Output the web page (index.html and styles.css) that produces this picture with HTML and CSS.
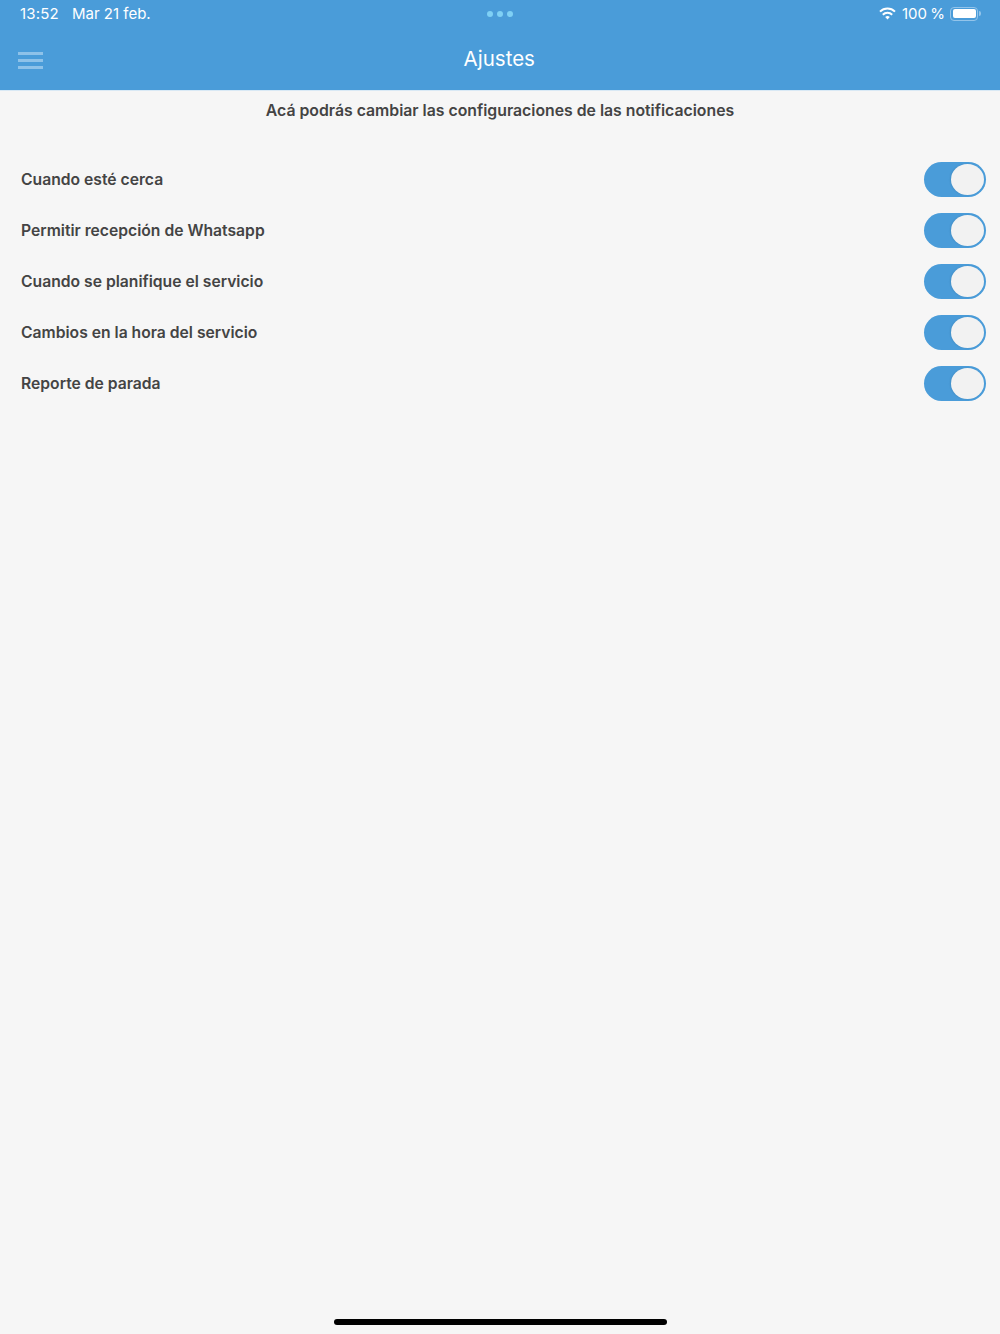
FILE: index.html
```html
<!DOCTYPE html>
<html lang="es">
<head>
<meta charset="utf-8">
<title>Ajustes</title>
<link rel="stylesheet" href="styles.css">
</head>
<body>
<div class="page">
  <header class="header">
    <div class="status">
      <div class="status-left"><span class="time">13:52</span><span>Mar 21 feb.</span></div>
      <div class="dots"><i></i><i></i><i></i></div>
      <div class="status-right">
        <svg class="wifi" width="17" height="13" viewBox="0 0 17 13" fill="none" stroke="#fff"><path d="M1 4.600A10.600 10.600 0 0 1 16 4.600" stroke-width="2"/><path d="M3.800 7.700A6.600 6.600 0 0 1 13.200 7.700" stroke-width="2"/><path d="M6.200 10.100a3.200 3.200 0 0 1 4.600 0L8.500 12.600z" fill="#fff" stroke="none"/></svg>
        <span class="pct">100 %</span>
        <div class="battery"><div class="battery-fill"></div></div>
        <div class="battery-tip"></div>
      </div>
    </div>
    <div class="nav">
      <div class="menu"><i></i><i></i><i></i></div>
      <h1 class="title">Ajustes</h1>
    </div>
  </header>
  <p class="intro">Acá podrás cambiar las configuraciones de las notificaciones</p>
  <ul class="list">
    <li class="row"><span>Cuando esté cerca</span><div class="switch"><div class="knob"></div></div></li>
    <li class="row"><span>Permitir recepción de Whatsapp</span><div class="switch"><div class="knob"></div></div></li>
    <li class="row"><span>Cuando se planifique el servicio</span><div class="switch"><div class="knob"></div></div></li>
    <li class="row"><span>Cambios en la hora del servicio</span><div class="switch"><div class="knob"></div></div></li>
    <li class="row"><span>Reporte de parada</span><div class="switch"><div class="knob"></div></div></li>
  </ul>
  <div class="spacer"></div>
  <div class="home-wrap"><div class="home"></div></div>
</div>
</body>
</html>
```
FILE: styles.css
```css
* { box-sizing: border-box; }
html, body { margin: 0; padding: 0; }
body {
  font-family: Inter, Roboto, "Liberation Sans", sans-serif;
  background: #f6f6f6;
  color: #444;
}
.page {
  height: 1334px;
  display: flex;
  flex-direction: column;
  overflow: hidden;
}
.header {
  height: 91px;
  flex: none;
  background: #4a9cd9;
  color: #fff;
  border-bottom: 1px solid #d9e9f5;
}
.status {
  height: 27px;
  padding: 0 19px 0 20px;
  display: grid;
  grid-template-columns: 1fr auto 1fr;
  align-items: center;
  font-size: 15px;
}
.status-left { display: flex; gap: 13px; }
.time { letter-spacing: .2px; }
.status-right { display: flex; align-items: center; justify-content: flex-end; gap: 5px; }
.pct { word-spacing: -1px; }
.dots { display: flex; gap: 4px; margin-right: 1px; }
.dots i { width: 6px; height: 6px; border-radius: 50%; background: #7fd0f5; }
.wifi { display: block; margin-right: 1px; }
.battery {
  width: 28px;
  height: 14px;
  padding: 1.5px;
  border: 1px solid #93c4ea;
  border-radius: 4px;
}
.battery-fill { height: 100%; background: #fff; border-radius: 2px; }
.battery-tip {
  width: 2px;
  height: 5px;
  margin-left: -4px;
  background: #93c4ea;
  border-radius: 0 2px 2px 0;
}
.nav {
  height: 63px;
  position: relative;
  display: flex;
  align-items: center;
  justify-content: center;
}
.title { margin: 0 1.500px 0 0; font-size: 20.500px; font-weight: 400; }
.menu {
  position: absolute;
  left: 18px;
  top: 25px;
  width: 25px;
  display: flex;
  flex-direction: column;
  gap: 4px;
}
.menu i { height: 3px; background: #8ec2e9; }
.intro {
  margin: 0;
  padding-top: 10px;
  height: 63px;
  line-height: 20px;
  text-align: center;
  font-size: 15.800px;
  font-weight: 600;
}
.list { list-style: none; margin: 0; padding: 0 14px 0 21px; }
.row {
  height: 51px;
  display: flex;
  align-items: center;
  justify-content: space-between;
  font-size: 15.700px;
  font-weight: 600;
}
.switch {
  width: 62px;
  height: 35px;
  border-radius: 18px;
  background: #4a9cd9;
  display: flex;
  justify-content: flex-end;
  padding: 2px;
}
.knob {
  width: 33px;
  height: 31px;
  border-radius: 50%;
  background: #f2f2f2;
  box-shadow: -1px 0 2px rgba(0, 0, 0, .08);
}
.spacer { flex: 1; }
.home-wrap { padding-bottom: 9px; display: flex; justify-content: center; }
.home { width: 333px; height: 6px; border-radius: 3px; background: #000; }
```
